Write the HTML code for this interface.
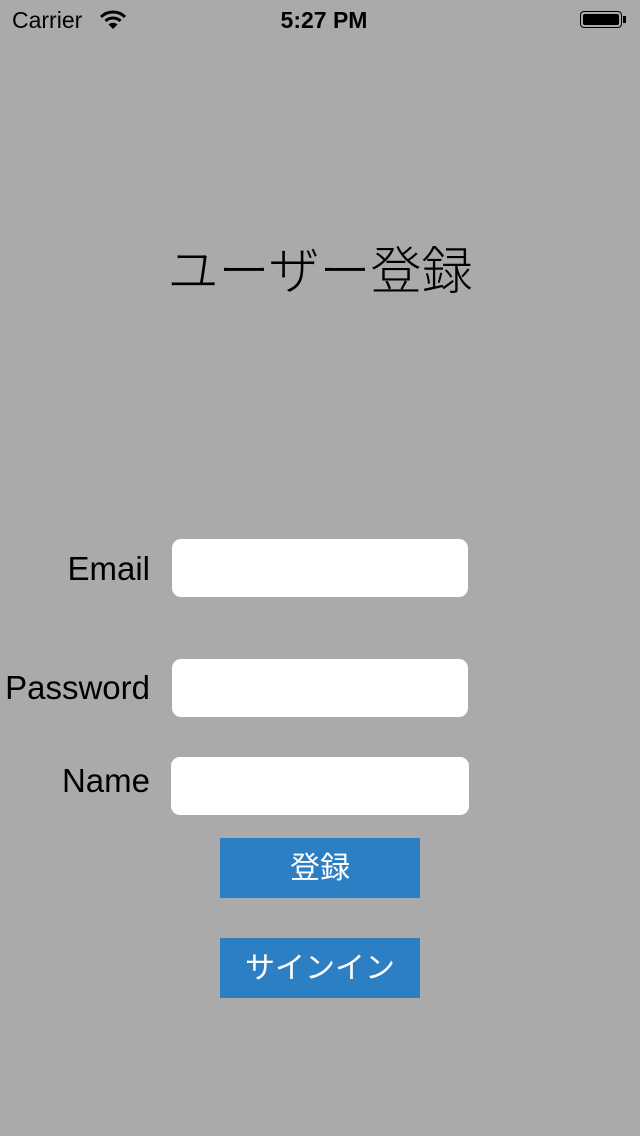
<!DOCTYPE html>
<html><head><meta charset="utf-8"><style>
body{margin:0;width:640px;height:1136px;background:#aaaaaa;position:relative;overflow:hidden;font-family:"Liberation Sans","Noto Sans CJK JP",sans-serif;color:#000}
.a{position:absolute}
.lbl{font-size:33px;text-align:right;width:150px;left:0}
.f{background:#fff;border-radius:9px;height:58px}
.b{background:#2d7fc3;color:#fff;font-size:30px;text-align:center;line-height:62px;width:200px;height:60px;left:220px}
</style></head><body>
<div class="a" style="left:12px;top:7px;font-size:23px">Carrier</div>
<svg class="a" style="left:100px;top:10px" width="26" height="20" viewBox="0 0 26 20"><path d="M1 7 A17 17 0 0 1 25 7" stroke="#000" stroke-width="3" fill="none"/><path d="M5.5 11 A11 11 0 0 1 20.5 11" stroke="#000" stroke-width="3" fill="none"/><path d="M13 19 L8.5 14.5 A6.5 6.5 0 0 1 17.5 14.5 Z" fill="#000"/></svg>
<div class="a" style="left:0;width:648px;text-align:center;top:7px;font-size:23px;font-weight:bold">5:27 PM</div>
<div class="a" style="left:580px;top:11px;width:42px;height:17px;border:1.5px solid #000;border-radius:4px;box-sizing:border-box;padding:2px"><div style="background:#000;height:100%;border-radius:2px"></div></div>
<div class="a" style="left:623px;top:16px;width:3px;height:7px;background:#000"></div>
<div class="a" style="left:0;width:640px;text-align:center;top:230px;font-size:51px;font-weight:300">ユーザー登録</div>
<div class="a lbl" style="top:550px">Email</div>
<div class="a f" style="left:172px;top:539px;width:296px"></div>
<div class="a lbl" style="top:669px">Password</div>
<div class="a f" style="left:172px;top:659px;width:296px"></div>
<div class="a lbl" style="top:762px">Name</div>
<div class="a f" style="left:171px;top:757px;width:298px"></div>
<div class="a b" style="top:838px">登録</div>
<div class="a b" style="top:938px">サインイン</div>
</body></html>
